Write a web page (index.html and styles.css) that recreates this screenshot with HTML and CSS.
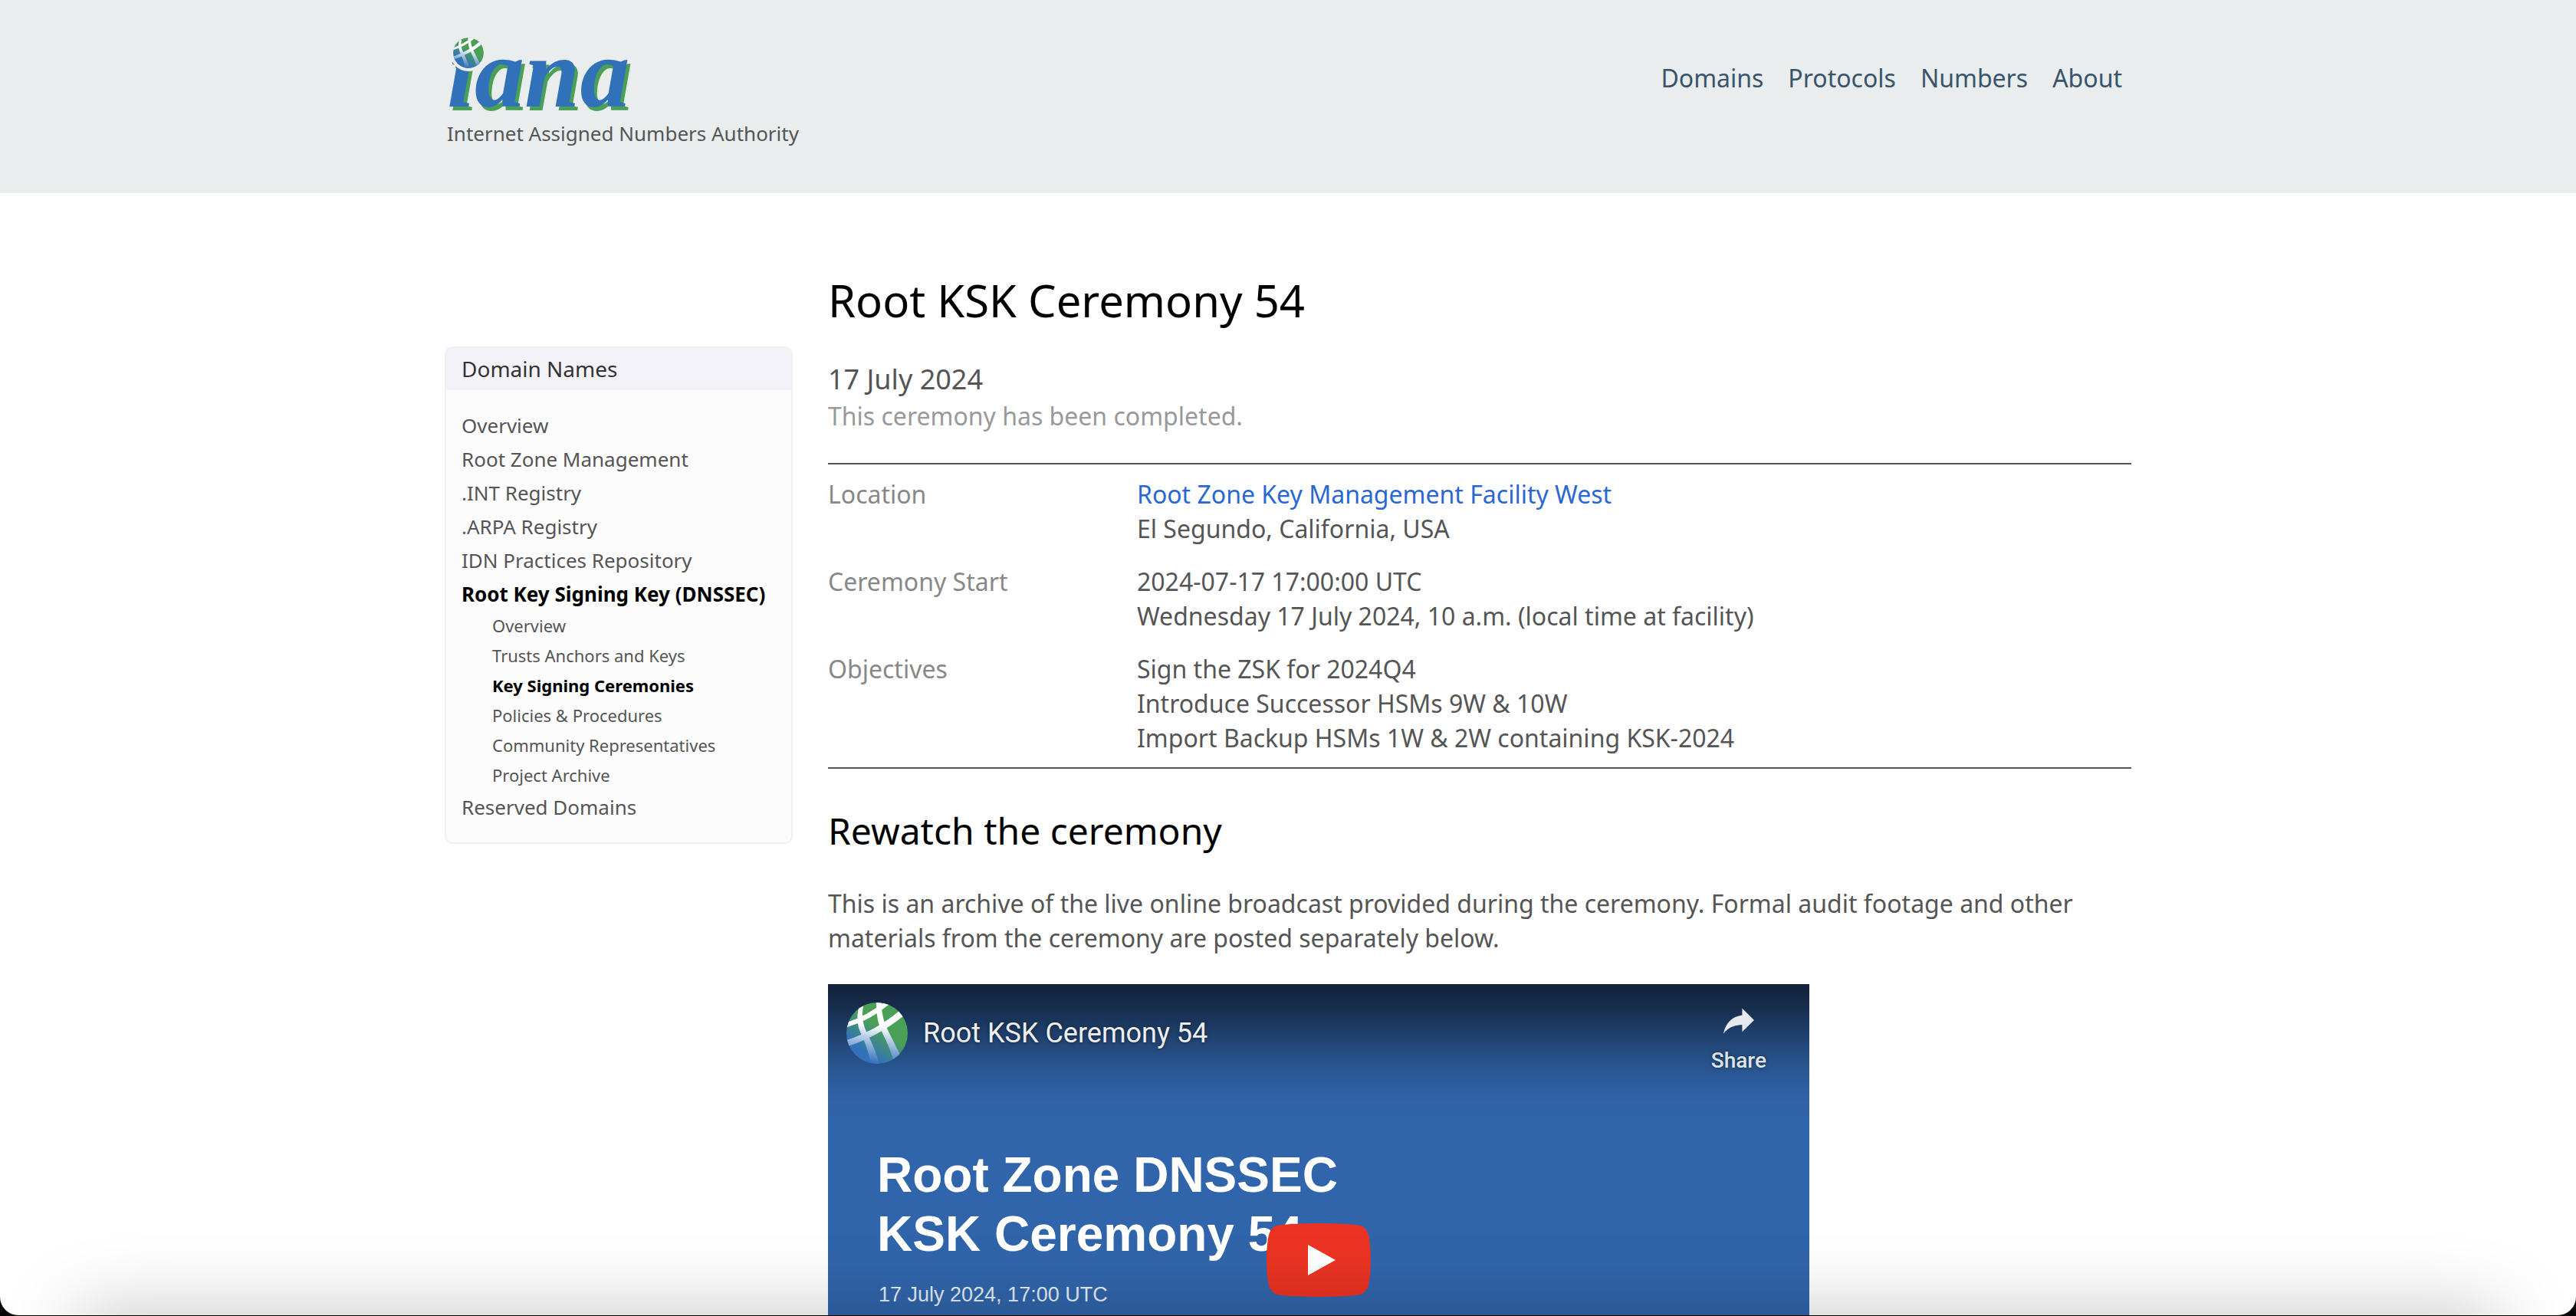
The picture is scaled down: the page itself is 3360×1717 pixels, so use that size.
FILE: index.html
```html
<!DOCTYPE html>
<html lang="en">
<head>
<meta charset="utf-8">
<title>Root KSK Ceremony 54</title>
<link rel="stylesheet" href="styles.css">
</head>
<body>
<svg class="defs" aria-hidden="true">
  <defs>
    <linearGradient id="globe-fill" gradientUnits="userSpaceOnUse" x1="48" y1="36" x2="26" y2="66">
      <stop offset="0" stop-color="#4aa056"/>
      <stop offset="1" stop-color="#3171b9"/>
    </linearGradient>
    <linearGradient id="globe-line" gradientUnits="userSpaceOnUse" x1="44" y1="30" x2="36" y2="80">
      <stop offset="0" stop-color="#fff"/>
      <stop offset="1" stop-color="#3171b9"/>
    </linearGradient>
    <clipPath id="globe-clip"><circle cx="40" cy="40" r="40"/></clipPath>
    <symbol id="globe" viewBox="0 0 80 80">
      <g clip-path="url(#globe-clip)">
        <rect width="80" height="80" fill="url(#globe-fill)"/>
        <g fill="url(#globe-line)">
          <path d="M16 7 L22 4 Q18 24 28 42 Q38 62 43 80 L32 80 Q28 60 20 43 Q11 26 16 7Z"/>
          <path d="M39 -1 L46 -1 Q45 18 54 36 Q63 54 70 68 L62 77 Q56 57 47 40 Q38 22 39 -1Z"/>
          <path d="M-2 27 Q26 18 50 -1 L55 3 Q30 24 -2 33Z"/>
          <path d="M-2 50 Q40 36 70 10 L75 17 Q42 44 2 57Z"/>
        </g>
      </g>
    </symbol>
  </defs>
</svg>
<div class="window">
  <header class="site-header">
    <div class="container header-row">
      <a class="logo" href="#">
        <span class="wordmark">iana<svg class="wordmark-globe" aria-hidden="true"><use href="#globe"/></svg></span>
        <span class="tagline">Internet Assigned Numbers Authority</span>
      </a>
      <nav class="main-nav" aria-label="Main">
        <a href="#">Domains</a>
        <a href="#">Protocols</a>
        <a href="#">Numbers</a>
        <a href="#">About</a>
      </nav>
    </div>
  </header>

  <div class="container page">
    <aside class="sidebar">
      <h2 class="sidebar-title">Domain Names</h2>
      <ul class="sidebar-list">
        <li><a href="#">Overview</a></li>
        <li><a href="#">Root Zone Management</a></li>
        <li><a href="#">.INT Registry</a></li>
        <li><a href="#">.ARPA Registry</a></li>
        <li><a href="#">IDN Practices Repository</a></li>
        <li><a class="current" href="#">Root Key Signing Key (DNSSEC)</a>
          <ul class="sidebar-sublist">
            <li><a href="#">Overview</a></li>
            <li><a href="#">Trusts Anchors and Keys</a></li>
            <li><a class="current" href="#">Key Signing Ceremonies</a></li>
            <li><a href="#">Policies &amp; Procedures</a></li>
            <li><a href="#">Community Representatives</a></li>
            <li><a href="#">Project Archive</a></li>
          </ul>
        </li>
        <li><a href="#">Reserved Domains</a></li>
      </ul>
    </aside>

    <main class="content">
      <h1>Root KSK Ceremony 54</h1>
      <p class="date">17 July 2024</p>
      <p class="status">This ceremony has been completed.</p>

      <div class="details">
        <table>
          <tr>
            <th scope="row">Location</th>
            <td><a href="#">Root Zone Key Management Facility West</a><br>El Segundo, California, USA</td>
          </tr>
          <tr>
            <th scope="row">Ceremony Start</th>
            <td>2024-07-17 17:00:00 UTC<br>Wednesday 17 July 2024, 10 a.m. (local time at facility)</td>
          </tr>
          <tr>
            <th scope="row">Objectives</th>
            <td>Sign the ZSK for 2024Q4<br>Introduce Successor HSMs 9W &amp; 10W<br>Import Backup HSMs 1W &amp; 2W containing KSK-2024</td>
          </tr>
        </table>
      </div>

      <h2>Rewatch the ceremony</h2>
      <p class="intro">This is an archive of the live online broadcast provided during the ceremony. Formal audit footage and other materials from the ceremony are posted separately below.</p>

      <section class="video" aria-label="Video">
        <div class="video-bar">
          <svg class="avatar" aria-hidden="true"><use href="#globe"/></svg>
          <a class="video-title" href="#">Root KSK Ceremony 54</a>
          <button class="share" type="button">
            <svg viewBox="0 0 36 36" aria-hidden="true"><path d="m20.2 14.19 0-4.45 7.79 7.79-7.79 7.56 0-4.56C16.27 20.69 12.1 21.81 9.34 24.76 8.8 25.13 7.6 27.29 8.12 25.65 9.08 21.32 11.8 17.18 15.98 15.38c1.33-.6 2.76-.98 4.21-1.19z" fill="#e6e9ee"/></svg>
            <span>Share</span>
          </button>
        </div>
        <div class="slide">
          <p class="slide-title">Root Zone DNSSEC<br>KSK Ceremony 54</p>
          <p class="slide-date">17 July 2024, 17:00 UTC</p>
        </div>
        <button class="play" type="button" aria-label="Play">
          <svg viewBox="0 0 68 48" aria-hidden="true"><path fill="#eb3323" d="M66.52 7.74c-.78-2.93-2.49-5.41-5.42-6.19C55.79.13 34 0 34 0S12.21.13 6.9 1.55C3.97 2.33 2.27 4.81 1.48 7.74.06 13.05 0 24 0 24s.06 10.95 1.48 16.26c.78 2.93 2.49 5.41 5.42 6.19C12.21 47.87 34 48 34 48s21.79-.13 27.1-1.55c2.93-.78 4.64-3.26 5.42-6.19C67.94 34.95 68 24 68 24s-.06-10.95-1.48-16.26z"/><path fill="#fff" d="M45 24 27 14v20z"/></svg>
        </button>
      </section>
    </main>
  </div>
  <div class="bottom-shade"></div>
</div>
</body>
</html>
```
FILE: styles.css
```css
* {
  box-sizing: border-box;
}

body,
h1,
h2,
p,
ul {
  margin: 0;
  padding: 0;
}

html {
  background: #060604;
}

body {
  font: 32px/45px "Noto Sans", sans-serif;
  color: #555;
}

a {
  color: inherit;
  text-decoration: none;
}

ul {
  list-style: none;
}

button {
  margin: 0;
  padding: 0;
  border: 0;
  background: none;
  cursor: pointer;
}

.defs {
  position: absolute;
  width: 0;
  height: 0;
}

/* Rounded browser window */
.window {
  position: relative;
  height: calc(100vh - 1px);
  overflow: hidden;
  background: #fff;
  border-radius: 0 0 24px 24px;
}

.bottom-shade {
  position: absolute;
  left: 100px;
  right: 100px;
  top: 100%;
  height: 80px;
  box-shadow: 0 0 100px rgba(0, 0, 0, 0.26);
  pointer-events: none;
}

.container {
  max-width: 2200px;
  margin: 0 auto;
}

/* Header */
.site-header {
  background: #e9eded;
  border-bottom: 2px solid #eee;
}

.header-row {
  display: flex;
  justify-content: space-between;
  align-items: flex-start;
  padding: 48px 12px 58px 3px;
}

.logo {
  display: flex;
  flex-direction: column;
}

.wordmark {
  position: relative;
  height: 108px;
  font: italic bold 130px/94px "Liberation Serif", serif;
  color: #3171b9;
  text-shadow: 4px 5px 0 #4aa056;
}

.wordmark-globe {
  position: absolute;
  left: 8px;
  top: 1px;
  width: 40px;
  height: 40px;
  background: #e9eded;
  border-radius: 50%;
  box-shadow: 0 0 0 4px #e9eded;
}

.tagline {
  font-size: 26px;
  line-height: 36px;
}

.main-nav {
  display: flex;
  gap: 32px;
  padding-top: 31px;
  color: #3a546b;
}

/* Page */
.page {
  display: flex;
  align-items: flex-start;
  gap: 46px;
  padding-top: 100px;
}

.sidebar {
  flex: 0 0 454px;
  margin-top: 100px;
  background: #fcfcfc;
  border: 2px solid #f0f0f0;
  border-radius: 10px;
  overflow: hidden;
}

.sidebar-title {
  padding: 8px 20px;
  background: #f3f2f9;
  color: #333;
  font-size: 28px;
  font-weight: 400;
  line-height: 39px;
}

.sidebar-list {
  padding: 24px 20px;
  font-size: 26px;
  line-height: 44px;
}

.sidebar-list a {
  display: block;
}

.sidebar-sublist {
  padding-left: 40px;
  font-size: 22px;
  line-height: 39px;
}

.current {
  color: #000;
  font-weight: 700;
}

.content {
  flex: 1;
  min-width: 0;
}

.content h1,
.content h2 {
  color: #000;
  font-weight: 400;
}

.content h1 {
  margin-bottom: 38px;
  font-size: 58px;
  line-height: 80px;
}

.content h2 {
  margin: 48px 0 39px;
  font-size: 48px;
  line-height: 66px;
}

.date {
  font-size: 36px;
  line-height: 50px;
}

.status {
  color: #999;
}

.details {
  margin-top: 39px;
  padding: 4px 0;
  border-top: 2px solid #555;
  border-bottom: 2px solid #555;
}

.details table {
  width: 100%;
  border-collapse: collapse;
}

.details th,
.details td {
  padding: 12px 0;
  text-align: left;
  vertical-align: top;
}

.details th {
  width: 403px;
  color: #888;
  font-weight: 400;
}

.details a {
  color: #2a67d3;
}

.intro {
  margin-bottom: 38px;
}

/* Video player */
.video {
  position: relative;
  width: 1280px;
  max-width: 100%;
  aspect-ratio: 16 / 9;
  background: linear-gradient(#11223a 0, #162c4b 28px, #1e3d68 60px, #264e84 92px, #2c5b9a 124px, #3063a8 156px, #3165ab 188px);
}

.video-bar {
  display: flex;
  align-items: center;
  height: 128px;
  padding: 0 56px 0 24px;
  font-family: Roboto, sans-serif;
  text-shadow: 0 0 4px rgba(0, 0, 0, 0.5);
}

.avatar {
  width: 80px;
  height: 80px;
  margin-right: 20px;
}

.video-title {
  color: #eee;
  font-size: 36px;
}

.share {
  display: flex;
  flex-direction: column;
  align-items: center;
  margin-left: auto;
  color: #dfe3e9;
  font: 500 28px/32px Roboto, sans-serif;
  text-shadow: inherit;
}

.share svg {
  width: 72px;
  height: 72px;
}

.slide {
  padding: 83px 64px 0;
  color: #fff;
  font-family: "Liberation Sans", sans-serif;
}

.slide-title {
  margin-bottom: 24px;
  font-size: 64px;
  font-weight: 700;
  line-height: 77px;
}

.slide-date {
  padding-left: 2px;
  color: #e3edf5;
  font-size: 27px;
  line-height: 32px;
}

.play {
  position: absolute;
  inset: 0;
  width: 136px;
  height: 96px;
  margin: auto;
}

.play svg {
  display: block;
}
```
